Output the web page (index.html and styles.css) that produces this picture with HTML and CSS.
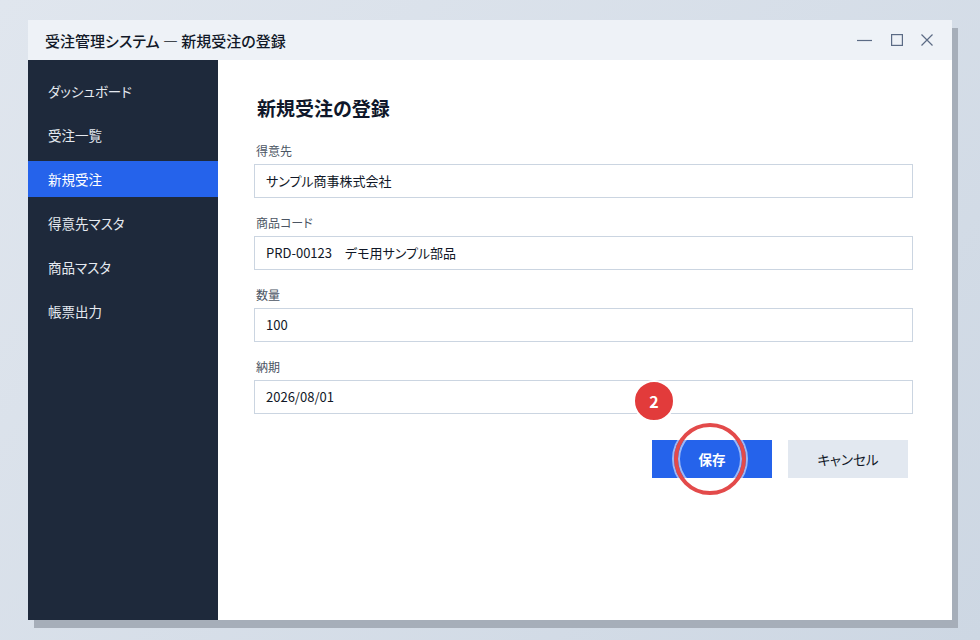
FILE: index.html
```html
<!DOCTYPE html>
<html lang="ja">
<head>
  <meta charset="UTF-8" />
  <title>受注管理システム — 新規受注の登録</title>
  <link rel="stylesheet" href="styles.css">
</head>
<body>
  <div class="window">
    <div class="titlebar">
      <div class="title">受注管理システム — 新規受注の登録</div>
      <div class="controls">
        <svg width="16" height="12" viewBox="0 0 16 12"><line x1="0" y1="6.5" x2="15" y2="6.5" stroke="#5b6b85" stroke-width="1.2"/></svg>
        <svg width="12" height="12" viewBox="0 0 12 12"><rect x="0.6" y="0.6" width="10.8" height="10.8" fill="none" stroke="#5b6b85" stroke-width="1.2"/></svg>
        <svg width="12" height="12" viewBox="0 0 12 12"><path d="M0.5 0.5 L11.5 11.5 M11.5 0.5 L0.5 11.5" stroke="#5b6b85" stroke-width="1.2"/></svg>
      </div>
    </div>

    <div class="body">
      <nav class="side">
        <div class="nav-item">ダッシュボード</div>
        <div class="nav-item">受注一覧</div>
        <div class="nav-item active">新規受注</div>
        <div class="nav-item">得意先マスタ</div>
        <div class="nav-item">商品マスタ</div>
        <div class="nav-item">帳票出力</div>
      </nav>

      <main class="content">
        <h1>新規受注の登録</h1>

        <div class="field">
          <label>得意先</label>
          <div class="input">サンプル商事株式会社</div>
        </div>
        <div class="field">
          <label>商品コード</label>
          <div class="input">PRD-00123　デモ用サンプル部品</div>
        </div>
        <div class="field">
          <label>数量</label>
          <div class="input">100</div>
        </div>
        <div class="field">
          <label>納期</label>
          <div class="input">2026/08/01</div>
        </div>

        <div class="actions">
          <div class="save-wrap">
            <button class="btn btn-primary">保存</button>
            <div class="ring"></div>
            <div class="badge">2</div>
          </div>
          <button class="btn btn-secondary">キャンセル</button>
        </div>
      </main>
    </div>
  </div>
</body>
</html>
```

FILE: styles.css
```css
* {
  box-sizing: border-box;
}

html, body {
  margin: 0;
  padding: 0;
  height: 100%;
}

body {
  font-family: "Noto Sans CJK JP", "Noto Sans", sans-serif;
  font-feature-settings: "palt";
  background: linear-gradient(135deg, #e0e6ee, #cdd7e3);
  padding: 20px 28px;
}

.window {
  width: 924px;
  height: 600px;
  display: flex;
  flex-direction: column;
  background: #fff;
  box-shadow: 6px 8px 0 #a6aeb9;
}

.titlebar {
  height: 40px;
  flex: none;
  display: flex;
  align-items: center;
  justify-content: space-between;
  background: #eef2f7;
  padding: 0 19px 0 17px;
}

.title {
  font-size: 15px;
  font-weight: 500;
  color: #111827;
}

.controls {
  display: flex;
  align-items: center;
  gap: 18px;
}

.body {
  flex: 1;
  display: flex;
  min-height: 0;
}

.side {
  width: 190px;
  flex: none;
  background: #1e293b;
  padding-top: 13px;
  display: flex;
  flex-direction: column;
  gap: 8px;
}

.nav-item {
  height: 36px;
  line-height: 36px;
  padding-left: 20px;
  font-size: 13.5px;
  color: #e5e9f0;
}

.nav-item.active {
  background: #2563eb;
  color: #fff;
}

.content {
  flex: 1;
  padding: 34px 39px 0 36px;
}

h1 {
  margin: 0 0 20px 3px;
  font-size: 19px;
  font-weight: 700;
  line-height: 28px;
  color: #0f172a;
}

.field {
  margin-bottom: 16px;
}

.field label {
  display: block;
  font-size: 12px;
  line-height: 18px;
  color: #4b5563;
  margin: 0 0 4px 2px;
}

.input {
  height: 34px;
  border: 1px solid #cbd5e1;
  padding: 0 11px;
  font-size: 13px;
  line-height: 32px;
  color: #111827;
}

.actions {
  display: flex;
  justify-content: flex-end;
  gap: 16px;
  padding: 10px 5px 0 0;
}

.save-wrap {
  position: relative;
}

.btn {
  width: 120px;
  height: 38px;
  border: none;
  font-family: inherit;
  font-feature-settings: "palt";
  font-size: 13.5px;
  cursor: pointer;
}

.btn-primary {
  background: #2563eb;
  color: #fff;
  font-weight: 700;
}

.btn-secondary {
  background: #e2e8f0;
  color: #111827;
}

/* пометка поверх кнопки */
.ring {
  position: absolute;
  left: 22px;
  top: -17px;
  width: 72px;
  height: 72px;
  border-radius: 50%;
  border: 4px solid #e34a4a;
  box-shadow: inset 0 0 0 2px rgba(255, 255, 255, 0.55), 0 0 0 2px rgba(255, 255, 255, 0.55);
  pointer-events: none;
}

.badge {
  position: absolute;
  left: -19px;
  top: -60px;
  width: 42px;
  height: 42px;
  border-radius: 50%;
  background: #e23b3b;
  border: 2px solid #fff;
  color: #fff;
  font-size: 16px;
  font-weight: 700;
  display: flex;
  align-items: center;
  justify-content: center;
}
```
